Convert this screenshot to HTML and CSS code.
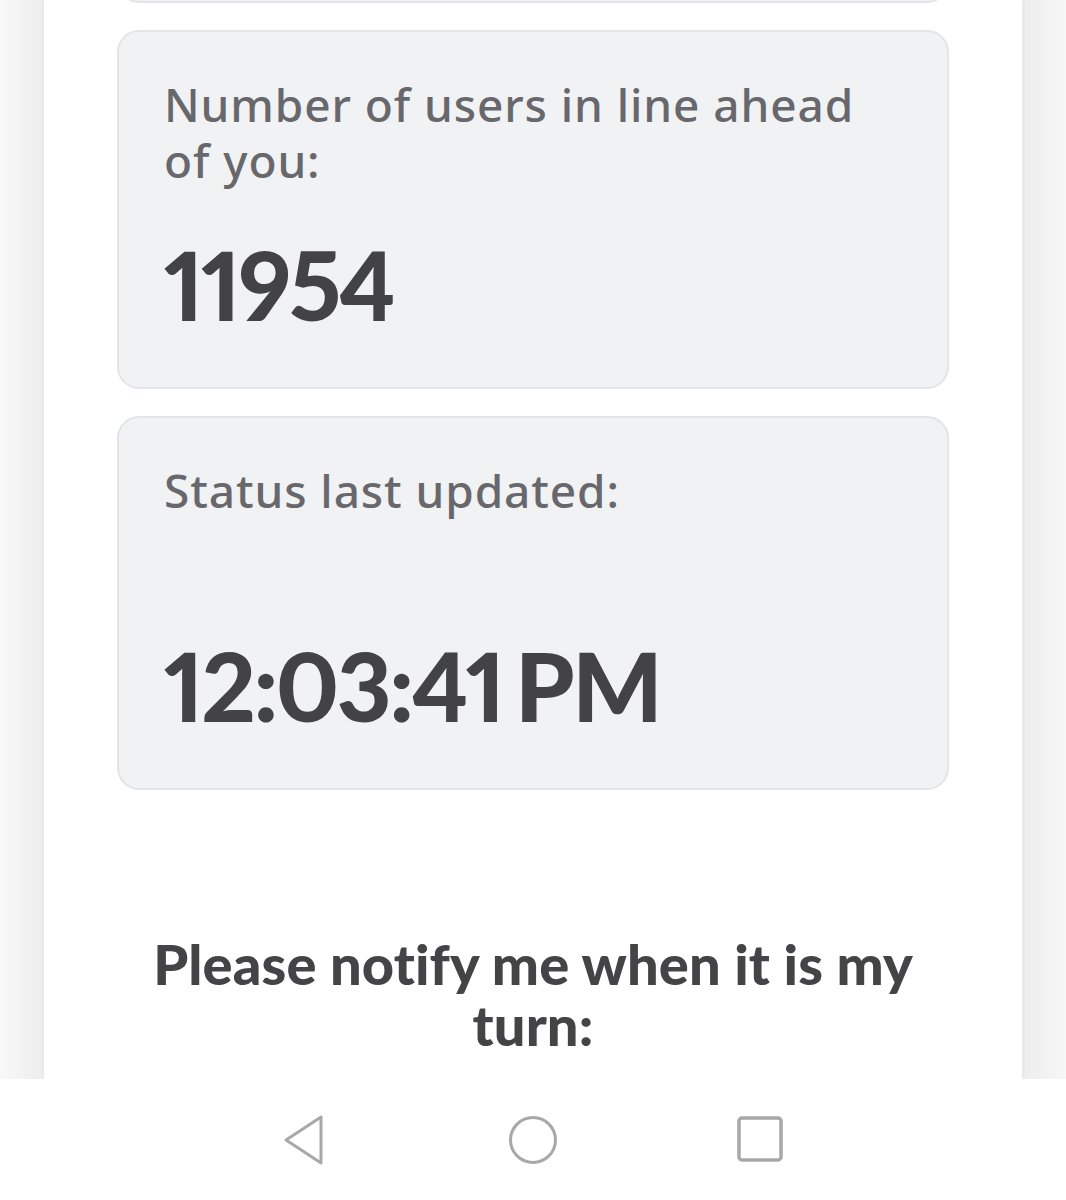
FILE: index.html
```html
<!DOCTYPE html>
<html lang="en">
<head>
<meta charset="utf-8">
<title>Queue status</title>
<link rel="stylesheet" href="styles.css">
</head>
<body>
<div class="screen">
  <main class="column">
    <div class="card card-prev"></div>
    <section class="card">
      <p class="label">Number of users in line ahead of you:</p>
      <p class="value">11954</p>
    </section>
    <section class="card">
      <p class="label">Status last updated:</p>
      <p class="value value-time">12:03:41 PM</p>
    </section>
    <h2 class="notify">Please notify me when it is my turn:</h2>
  </main>
</div>
<nav class="navbar">
  <svg class="nav-icon" width="50" height="56" viewBox="0 0 50 56">
    <path d="M40 5 L40 51 L5 28 Z" fill="none" stroke="#a8a8a8" stroke-width="3" stroke-linejoin="round"/>
  </svg>
  <svg class="nav-icon" width="56" height="56" viewBox="0 0 56 56">
    <circle cx="28" cy="28" r="22.5" fill="none" stroke="#a8a8a8" stroke-width="3"/>
  </svg>
  <svg class="nav-icon" width="50" height="56" viewBox="0 0 50 56">
    <rect x="4" y="6" width="42" height="42" rx="3" fill="none" stroke="#a8a8a8" stroke-width="3.5"/>
  </svg>
</nav>
</body>
</html>
```
FILE: styles.css
```css
* { box-sizing: border-box; }
html, body { margin: 0; padding: 0; }
body {
  width: 1066px;
  height: 1200px;
  background: #f5f5f5;
  display: flex;
  flex-direction: column;
  overflow: hidden;
  font-family: "Noto Sans", "Open Sans", "Liberation Sans", sans-serif;
}
.screen {
  height: 1079px;
  overflow: hidden;
  display: flex;
  justify-content: center;
  background: linear-gradient(to right, #f9f9f9 0, #ededed 44px, #ededed 1022px, #f7f7f7 1066px);
}
.column {
  width: 978px;
  background: #fff;
  padding: 0 73px;
  box-shadow: 0 0 6px rgba(0,0,0,0.05);
}
.card {
  background: #f1f2f4;
  border: 2px solid #e3e4e7;
  border-radius: 22px;
  padding: 44px 45px 55px;
  margin-top: 27px;
}
.card-prev {
  height: 60px;
  margin-top: -57px;
  padding: 0;
}
.label {
  margin: 0;
  font-size: 46px;
  font-weight: 500;
  line-height: 56px;
  color: #68686c;
  letter-spacing: 0.9px;
}
.value {
  margin: 49px 0 0;
  font-family: "Lato", "Liberation Sans", sans-serif;
  font-weight: 900;
  font-size: 95px;
  line-height: 95px;
  color: #434345;
  letter-spacing: -2.5px;
  word-spacing: -8px;
  font-variant-numeric: proportional-nums;
}
.value-time { margin-top: 120px; }
.notify {
  margin: 143px 0 0;
  padding: 0 20px;
  text-align: center;
  font-family: "Lato", "Liberation Sans", sans-serif;
  font-weight: 900;
  font-size: 56px;
  line-height: 61px;
  color: #444446;
  letter-spacing: 0.1px;
}
.navbar {
  height: 121px;
  background: #fff;
  display: flex;
  justify-content: center;
  align-items: center;
  gap: 174px;
}
.nav-icon { display: block; }
```
